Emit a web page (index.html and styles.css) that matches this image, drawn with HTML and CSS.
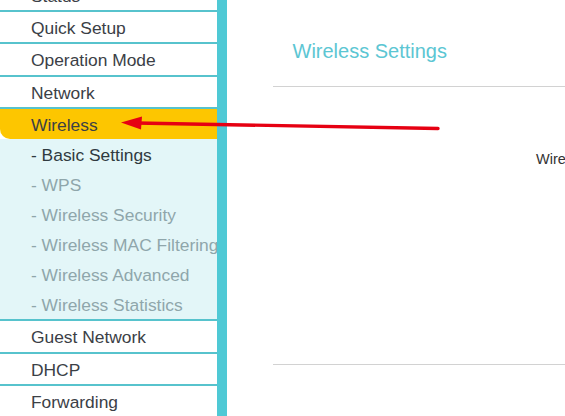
FILE: index.html
```html
<!DOCTYPE html>
<html>
<head>
<meta charset="utf-8">
<link rel="stylesheet" href="styles.css">
</head>
<body>
<div class="page">
  <nav class="sidebar">
    <ul class="menu">
      <li class="item">Status</li>
      <li class="item">Quick Setup</li>
      <li class="item">Operation Mode</li>
      <li class="item">Network</li>
      <li class="group">
        <div class="item active">Wireless</div>
        <ul class="sub">
          <li class="subitem current">- Basic Settings</li>
          <li class="subitem">- WPS</li>
          <li class="subitem">- Wireless Security</li>
          <li class="subitem">- Wireless MAC Filtering</li>
          <li class="subitem">- Wireless Advanced</li>
          <li class="subitem">- Wireless Statistics</li>
        </ul>
      </li>
      <li class="item">Guest Network</li>
      <li class="item">DHCP</li>
      <li class="item">Forwarding</li>
    </ul>
  </nav>
  <main class="main">
    <header class="head"><h1 class="title">Wireless Settings</h1></header>
    <section class="form">
      <div class="row"><span class="label">Wireless Radio:</span></div>
    </section>
    <div class="foot"></div>
  </main>
  <svg class="arrow" width="565" height="416" viewBox="0 0 565 416">
    <line x1="438" y1="128.5" x2="136" y2="123" stroke="#e60012" stroke-width="3.4" stroke-linecap="round"/>
    <polygon points="121,122.6 142,116.5 141,129.5" fill="#e60012"/>
  </svg>
</div>
</body>
</html>
```
FILE: styles.css
```css
html, body {
  margin: 0;
  padding: 0;
  width: 565px;
  height: 416px;
  overflow: hidden;
  background: #fff;
}
.page {
  position: relative;
  display: flex;
  width: 565px;
  height: 416px;
  overflow: hidden;
  font-family: "Liberation Sans", Arial, sans-serif;
}
.sidebar {
  flex: 0 0 217px;
  width: 217px;
  border-right: 10.5px solid #4fc9d5;
  background: #fff;
  overflow: hidden;
}
.menu {
  list-style: none;
  margin: -20.4px 0 0 0;
  padding: 0;
}
.item {
  height: 27.4px;
  line-height: 27.4px;
  padding-top: 3px;
  padding-left: 31px;
  font-size: 17.4px;
  color: #3b4046;
  border-bottom: 2px solid #57c3cd;
  white-space: nowrap;
}
.group {
  border-bottom: 2.4px solid #57c3cd;
}
.item.active {
  height: 27px;
  line-height: 27px;
  border-bottom: none;
  background: #fdc600;
  border-bottom-left-radius: 10px;
}
.sub {
  list-style: none;
  margin: 0;
  padding: 0;
  background: #e3f6f8;
}
.subitem {
  height: 28.5px;
  line-height: 28.5px;
  padding-top: 1.5px;
  padding-left: 31px;
  font-size: 17.4px;
  color: #8fa6ab;
  white-space: nowrap;
  overflow: hidden;
}
.subitem.current {
  color: #2f3a40;
}
.main {
  flex: 1;
  padding-left: 46px;
  overflow: hidden;
  color: #333;
}
.head {
  height: 86.5px;
  box-sizing: border-box;
  padding-top: 39.5px;
  border-bottom: 1.5px solid #d2d2d2;
}
.title {
  margin: 0 0 0 19.5px;
  font-size: 20px;
  line-height: 23px;
  font-weight: normal;
  color: #5cc6d3;
  white-space: nowrap;
}
.form {
  height: 277px;
  border-bottom: 1.5px solid #d2d2d2;
}
.row {
  padding-top: 63px;
  padding-left: 263px;
  white-space: nowrap;
}
.label {
  font-size: 14.5px;
  line-height: 16px;
  color: #333;
}
.arrow {
  position: absolute;
  left: 0;
  top: 0;
  pointer-events: none;
}
```
